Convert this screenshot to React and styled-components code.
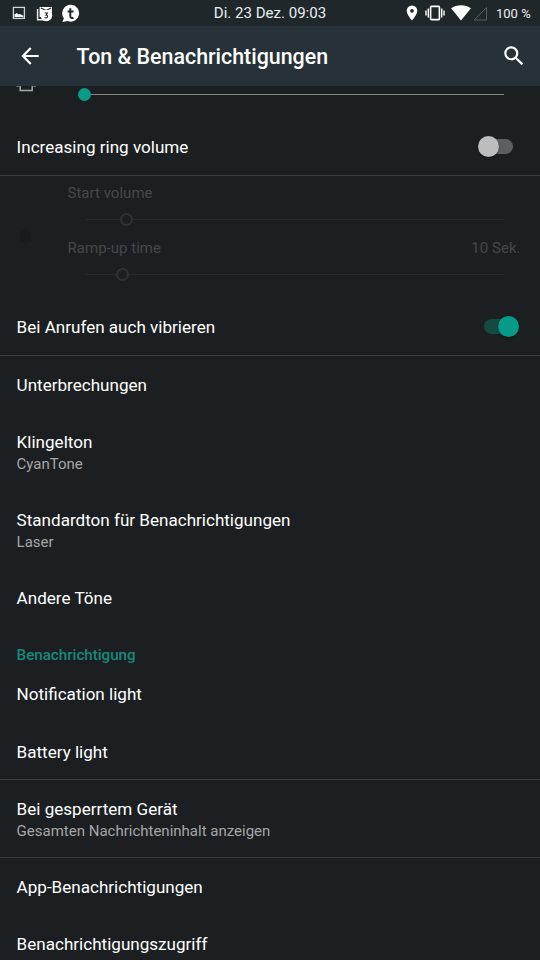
import React from 'react';
import styled, { createGlobalStyle } from 'styled-components';

const GlobalStyle = createGlobalStyle`
  * { box-sizing: border-box; }
  html, body { margin: 0; background: #1c1f21; }
  body { font-family: Roboto, "Noto Sans", sans-serif; overflow: hidden; }
  svg { display: block; flex: none; }
`;

const Screen = styled.div`
  width: 540px;
  height: 960px;
  overflow: hidden;
  display: flex;
  flex-direction: column;
  background: #1c1f21;
  color: #fff;
`;

const StatusBar = styled.header`
  flex: none;
  height: 26px;
  background: #1f272a;
  display: grid;
  grid-template-columns: 1fr auto 1fr;
  align-items: center;
`;

const StatusIcons = styled.div`
  display: flex;
  align-items: center;
  justify-content: ${(p) => (p.$end ? 'flex-end' : 'flex-start')};
  padding: ${(p) => (p.$end ? '0 9px 0 0' : '0 0 0 10px')};
`;

const StatusIcon = styled.span`
  margin-right: ${(p) => p.$gap || 0}px;
`;

const Clock = styled.time`
  padding-top: 1px;
  font-size: 15.05px;
  line-height: 25px;
  color: #e9eeef;
`;

const Battery = styled.span`
  width: 35px;
  margin-left: 8px;
  padding-top: 1px;
  font-size: 13px;
  line-height: 25px;
  white-space: nowrap;
  color: #e9eeef;
`;

const Toolbar = styled.nav`
  flex: none;
  height: 60px;
  padding: 0 13px 0 17px;
  display: flex;
  align-items: center;
  background: #263238;
`;

const Title = styled.h1`
  flex: 1;
  margin: 2px 0 0 33.6px;
  font-size: 21.4px;
  font-weight: 500;
  line-height: 28px;
`;

const List = styled.main`
  flex: 1;
  min-height: 0;
  overflow: hidden;
`;

const VolumeRow = styled.div`
  height: 32px;
  display: flex;
  align-items: flex-start;
  padding-left: 13.5px;
`;

const Row = styled.div`
  height: ${(p) => p.$height || 57}px;
  padding: 0 21px 0 16.6px;
  display: flex;
  align-items: center;
  justify-content: space-between;
  border-bottom: 1px solid ${(p) => (p.$divider ? '#3b3e40' : 'transparent')};
`;

const RowText = styled.div`
  align-self: flex-start;
  padding-top: 18px;
`;

const Label = styled.div`
  font-size: 17.07px;
  line-height: 22px;
`;

const Summary = styled.div`
  font-size: 15px;
  line-height: 22px;
  color: #a4a6a7;
`;

const SectionHeader = styled.h2`
  height: 39px;
  margin: 0;
  padding: 19px 16.6px 0;
  font-size: 15.15px;
  font-weight: 500;
  line-height: 20px;
  color: #168a7a;
`;

const RampPanel = styled.section`
  height: 122px;
  display: grid;
  grid-template-columns: 67.5px 1fr;
  color: #44484a;
`;

const RampIcon = styled.div`
  padding: 50px 0 0 16px;
`;

const RampFields = styled.div`
  padding: 7px 19.5px 0 0;
`;

const RampField = styled.div`
  height: 54.6px;
`;

const RampLabel = styled.div`
  display: flex;
  justify-content: space-between;
  font-size: 15.05px;
  line-height: 20px;
`;

const Track = styled.div`
  display: flex;
  align-items: center;
  width: ${(p) => p.$width}px;
  height: 14px;
  margin: ${(p) => p.$margin};
`;

const TrackLine = styled.div`
  height: 1px;
  width: ${(p) => p.$width || 'auto'};
  flex: ${(p) => (p.$width ? 'none' : 1)};
  background: ${(p) => p.$color};
`;

const Thumb = styled.div`
  flex: none;
  width: 13px;
  height: 13px;
  border-radius: 50%;
  background: ${(p) => (p.$off ? 'transparent' : '#0b9b87')};
  border: ${(p) => (p.$off ? '2px solid #2e3335' : '0')};
`;

const SwitchTrack = styled.div`
  width: 29px;
  height: 15px;
  margin-right: 6px;
  border-radius: 8px;
  background: ${(p) => (p.$on ? '#154a43' : '#5b5f60')};
  display: flex;
  align-items: center;
  justify-content: ${(p) => (p.$on ? 'flex-end' : 'flex-start')};
`;

const Knob = styled.div`
  flex: none;
  width: 21px;
  height: 21px;
  margin: 0 -6px 0 -6.5px;
  border-radius: 50%;
  background: ${(p) => (p.$on ? '#059b88' : '#bdbdbd')};
  box-shadow: 0 1px 2px rgba(0, 0, 0, 0.4);
`;

const PictureIcon = () => (
  <svg width="16" height="14" viewBox="0 0 16 14">
    <rect x="3.4" y="1.4" width="11" height="11" fill="none" stroke="#cfd4d6" strokeWidth="1.3" />
    <path d="M4.4 11V8.6l2.4-1.7 1.7 1.7 1.3-.7 3.6 1.8V11z" fill="#fff" />
  </svg>
);

const MailIcon = () => (
  <svg width="17" height="17" viewBox="0 0 17 17">
    <path d="M1.600 4v10.800H12" fill="none" stroke="#e4e8ea" strokeWidth="1.500" />
    <path d="M3.600 2h12.300v10H3.600z" fill="#fff" />
    <path d="M4.800 3 10 5.400 15 3" fill="none" stroke="#1f272a" strokeWidth="1.100" />
    <circle cx="10.400" cy="10.500" r="5.800" fill="#fff" />
    <path d="M8.700 8h2.700L10 10.100c2.400-.1 2 3-.1 2.900-.6 0-1-.2-1.300-.6" fill="none" stroke="#1f272a" strokeWidth="1.100" />
  </svg>
);

const ChatIcon = () => (
  <svg width="19" height="19" viewBox="0 0 19 19">
    <path d="M10 .8a8.400 8.400 0 1 1-3.100 16.300L1.400 18l1.500-3.700A8.500 8.500 0 0 1 10 .8z" fill="#fff" />
    <path d="M9.300 4.300v7.600c0 2 1.500 2.600 3.200 1.700M6.600 7.500h5.900" fill="none" stroke="#1f272a" strokeWidth="2" />
  </svg>
);

const PinIcon = () => (
  <svg width="12" height="16" viewBox="0 0 12 16">
    <path fillRule="evenodd" d="M6 .5A5.300 5.300 0 0 0 .7 5.800C.7 9.700 6 15.500 6 15.500s5.300-5.800 5.300-9.700A5.300 5.300 0 0 0 6 .5zm0 3.400a1.900 1.900 0 1 1 0 3.800 1.900 1.900 0 0 1 0-3.800z" fill="#fff" />
  </svg>
);

const VibrateIcon = () => (
  <svg width="20" height="16" viewBox="0 0 20 16">
    <rect x="5.600" y="1.400" width="8.800" height="13.200" rx=".8" fill="none" stroke="#fff" strokeWidth="1.600" />
    <path d="M3.300 3.600v8.800M16.700 3.600v8.800M1 5.600v4.800M19 5.600v4.800" stroke="#fff" strokeWidth="1.400" />
  </svg>
);

const WifiIcon = () => (
  <svg width="20" height="16" viewBox="0 0 20 16">
    <path d="M10 15.600.1 3.300C5.600-.7 14.400-.7 19.900 3.300z" fill="#fff" />
  </svg>
);

const SignalIcon = () => (
  <svg width="15" height="15" viewBox="0 0 15 15">
    <path d="M13.500 1.500v12.500H1.200z" fill="none" stroke="#596063" strokeWidth="1" />
  </svg>
);

const BackIcon = () => (
  <svg width="26" height="26" viewBox="0 0 24 24">
    <path d="M20 11H7.830l5.590-5.590L12 4l-8 8 8 8 1.410-1.410L7.830 13H20v-2z" fill="#fff" />
  </svg>
);

const SearchIcon = () => (
  <svg width="26" height="26" viewBox="0 0 24 24">
    <path d="M15.500 14h-.79l-.28-.27A6.471 6.471 0 0 0 16 9.500 6.500 6.500 0 1 0 9.500 16c1.610 0 3.090-.59 4.230-1.570l.27.28v.79l5 4.990L20.490 19l-4.990-5zm-6 0C7.010 14 5 11.990 5 9.500S7.010 5 9.500 5 14 7.010 14 9.500 11.990 14 9.500 14z" fill="#fff" />
  </svg>
);

const RingModeIcon = () => (
  <svg width="24" height="6" viewBox="0 0 24 6">
    <path d="M6.200 0v4.500h12V0" fill="none" stroke="#a5a7a8" strokeWidth="1.500" />
    <path d="M2.500.5h2.300M19.500.5h2.300" stroke="#747879" strokeWidth="1" />
  </svg>
);

const BellIcon = () => (
  <svg width="20" height="20" viewBox="0 0 24 24">
    <path d="M11.500 22a2 2 0 0 0 2-2h-4a2 2 0 0 0 2 2zM18 16v-5.500c0-3.070-2.130-5.640-5-6.320V3.500a1.500 1.500 0 0 0-3 0v.68C7.130 4.860 5 7.430 5 10.500V16l-2 2v1h17v-1z" fill="#181b1c" />
  </svg>
);

function Switch({ on }) {
  return (
    <SwitchTrack $on={on}>
      <Knob $on={on} />
    </SwitchTrack>
  );
}

function Setting({ label, summary, divider, height, children }) {
  return (
    <Row $divider={divider} $height={height}>
      <RowText>
        <Label>{label}</Label>
        {summary && <Summary>{summary}</Summary>}
      </RowText>
      {children}
    </Row>
  );
}

function RampSetting({ label, value, offset }) {
  return (
    <RampField>
      <RampLabel>
        <span>{label}</span>
        <span>{value}</span>
      </RampLabel>
      <Track $width={418} $margin="9.500px 0 0 18px">
        <TrackLine $width={offset} $color="#262b2d" />
        <Thumb $off />
        <TrackLine $color="#262b2d" />
      </Track>
    </RampField>
  );
}

export default function App() {
  return (
    <Screen>
      <GlobalStyle />
      <StatusBar>
        <StatusIcons>
          <StatusIcon $gap={10}><PictureIcon /></StatusIcon>
          <StatusIcon $gap={7.5}><MailIcon /></StatusIcon>
          <StatusIcon><ChatIcon /></StatusIcon>
        </StatusIcons>
        <Clock>Di. 23 Dez. 09:03</Clock>
        <StatusIcons $end>
          <StatusIcon $gap={7.5}><PinIcon /></StatusIcon>
          <StatusIcon $gap={5.5}><VibrateIcon /></StatusIcon>
          <StatusIcon $gap={2.5}><WifiIcon /></StatusIcon>
          <StatusIcon><SignalIcon /></StatusIcon>
          <Battery>100 %</Battery>
        </StatusIcons>
      </StatusBar>
      <Toolbar>
        <BackIcon />
        <Title>Ton &amp; Benachrichtigungen</Title>
        <SearchIcon />
      </Toolbar>
      <List>
        <VolumeRow>
          <RingModeIcon />
          <Track $width={426} $margin="1px 0 0 40.500px">
            <Thumb />
            <TrackLine $color="#858888" />
          </Track>
        </VolumeRow>
        <Setting label="Increasing ring volume" divider height={58}>
          <Switch />
        </Setting>
        <RampPanel>
          <RampIcon>
            <BellIcon />
          </RampIcon>
          <RampFields>
            <RampSetting label="Start volume" offset="34.500px" />
            <RampSetting label="Ramp-up time" value="10 Sek." offset="30.500px" />
          </RampFields>
        </RampPanel>
        <Setting label="Bei Anrufen auch vibrieren" divider height={58}>
          <Switch on />
        </Setting>
        <Setting label="Unterbrechungen" />
        <Setting label="Klingelton" summary="CyanTone" height={78} />
        <Setting label="Standardton für Benachrichtigungen" summary="Laser" height={78} />
        <Setting label="Andere Töne" />
        <SectionHeader>Benachrichtigung</SectionHeader>
        <Setting label="Notification light" height={58} />
        <Setting label="Battery light" divider />
        <Setting label="Bei gesperrtem Gerät" summary="Gesamten Nachrichteninhalt anzeigen" divider height={78} />
        <Setting label="App-Benachrichtigungen" />
        <Setting label="Benachrichtigungszugriff" />
      </List>
    </Screen>
  );
}
